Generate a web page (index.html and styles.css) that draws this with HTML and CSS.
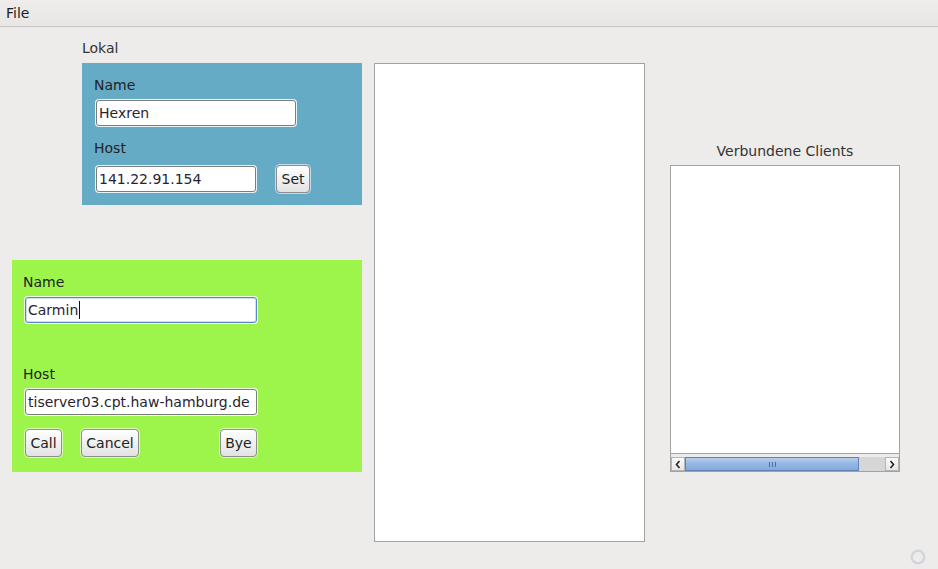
FILE: index.html
```html
<!DOCTYPE html>
<html lang="de">
<head>
<meta charset="utf-8">
<title>Chat</title>
<link rel="stylesheet" href="styles.css">
</head>
<body>
<div class="menubar"><span class="menu-item">File</span></div>
<div class="main">
  <div class="left-col">
    <div class="section-title">Lokal</div>
    <div class="panel panel-local">
      <div class="label">Name</div>
      <div class="field field-name-local"><span class="field-text">Hexren</span></div>
      <div class="label label-host">Host</div>
      <div class="row">
        <div class="field field-host-local"><span class="field-text">141.22.91.154</span></div>
        <button class="btn btn-set">Set</button>
      </div>
    </div>
    <div class="panel panel-remote">
      <div class="label">Name</div>
      <div class="field field-wide focused"><span class="field-text">Carmin</span><span class="caret"></span></div>
      <div class="label label-host-remote">Host</div>
      <div class="field field-wide"><span class="field-text">tiserver03.cpt.haw-hamburg.de</span></div>
      <div class="btn-row">
        <button class="btn btn-call">Call</button>
        <button class="btn btn-cancel">Cancel</button>
        <button class="btn btn-bye">Bye</button>
      </div>
    </div>
  </div>
  <div class="chat-list"></div>
  <div class="right-col">
    <div class="clients-title">Verbundene Clients</div>
    <div class="clients-list">
      <div class="clients-body"></div>
      <div class="hscroll">
        <div class="arrow arrow-left"><svg width="8" height="9" viewBox="0 0 8 9"><path d="M5.5 1 L2.5 4.5 L5.5 8" fill="none" stroke="#222" stroke-width="1.6"/></svg></div>
        <div class="track">
          <div class="thumb"><span class="grip"></span><span class="grip"></span><span class="grip"></span></div>
        </div>
        <div class="arrow arrow-right"><svg width="8" height="9" viewBox="0 0 8 9"><path d="M2.5 1 L5.5 4.5 L2.5 8" fill="none" stroke="#222" stroke-width="1.6"/></svg></div>
      </div>
    </div>
  </div>
</div>
<div class="status-ring"><svg width="18" height="18" viewBox="0 0 18 18"><circle cx="9" cy="9" r="6.3" fill="none" stroke="#d3d5da" stroke-width="2.4"/></svg></div>
</body>
</html>
```

FILE: styles.css
```css
* { box-sizing: border-box; }
html, body {
  margin: 0;
  padding: 0;
  width: 938px;
  height: 569px;
  overflow: hidden;
  background: #edeceb;
  font-family: "DejaVu Sans", "Open Sans", sans-serif;
  font-size: 14px;
  color: #2b2b2b;
}
body { position: relative; }
.menubar {
  height: 27px;
  background: linear-gradient(#eeedec, #e8e7e6);
  border-bottom: 1px solid #c6c5c4;
  padding-left: 6px;
  line-height: 27px;
  font-size: 14px;
  color: #1c1c1c;
}
.main {
  display: flex;
  align-items: flex-start;
  padding: 12px 0 0 12px;
}
.left-col {
  width: 350px;
  display: flex;
  flex-direction: column;
}
.section-title {
  margin-left: 70px;
  height: 24px;
  line-height: 19px;
  color: #333;
}
.panel-local {
  margin-left: 70px;
  width: 280px;
  height: 142px;
  background: #65abc6;
  padding: 12px 12px 0 14px;
}
.panel-remote {
  margin-top: 55px;
  width: 350px;
  height: 212px;
  background: #9df54c;
  padding: 12px 12px 0 13px;
}
.label {
  height: 18px;
  line-height: 20px;
  margin-left: -2px;
  margin-bottom: 7px;
  color: #222;
}
.label-host { margin-top: 12px; margin-bottom: 9px; }
.label-host-remote { margin-top: 41px; margin-bottom: 7px; }
.field {
  height: 26px;
  background: #fff;
  border: 1px solid #7c7c7c;
  border-radius: 3px;
  box-shadow: 0 0 0 1px rgba(255,255,255,0.85);
  padding: 0 2px;
  line-height: 24px;
  white-space: nowrap;
  overflow: hidden;
  color: #2a1f33;
  display: flex;
  align-items: center;
}
.field-name-local { width: 200px; }
.field-host-local { width: 160px; }
.field-wide { width: 232px; }
.field.focused {
  border-color: #5a86c8;
  box-shadow: 0 0 0 1px rgba(255,255,255,0.85), inset 0 0 0 1px rgba(120,160,220,0.35);
}
.caret {
  display: inline-block;
  width: 1px;
  height: 18px;
  background: #111;
  margin-left: 1px;
}
.row {
  display: flex;
  align-items: center;
  gap: 20px;
}
.btn {
  height: 28px;
  font-family: inherit;
  font-size: 14px;
  color: #222;
  background: linear-gradient(#ffffff, #f1f1f1 50%, #e2e2e2);
  border: 1px solid #8e8e8e;
  border-radius: 4px;
  padding: 0;
  box-shadow: 0 0 0 1px rgba(255,255,255,0.6);
}
.btn-set { width: 34px; }
.btn-row {
  display: flex;
  margin-top: 14px;
}
.btn-call { width: 37px; }
.btn-cancel { width: 58px; margin-left: 19px; }
.btn-bye { width: 37px; margin-left: auto; margin-right: 93px; }
.chat-list {
  margin-left: 12px;
  margin-top: 24px;
  width: 271px;
  height: 479px;
  background: #fff;
  border: 1px solid #a2a2a2;
}
.right-col {
  margin-left: 25px;
  margin-top: 102px;
  width: 230px;
  display: flex;
  flex-direction: column;
}
.clients-title {
  height: 24px;
  line-height: 20px;
  text-align: center;
  color: #333;
}
.clients-list {
  height: 307px;
  background: #fff;
  border: 1px solid #a2a2a2;
  display: flex;
  flex-direction: column;
}
.clients-body { flex: 1; }
.hscroll {
  height: 18px;
  border-top: 1px solid #a7a7a7;
  background: #ececec;
  display: flex;
  padding-top: 3px;
}
.arrow {
  width: 14px;
  height: 14px;
  background: linear-gradient(#fbfbfb, #e6e6e6);
  border: 1px solid #b4b4b4;
  display: flex;
  align-items: center;
  justify-content: center;
}
.track {
  flex: 1;
  height: 14px;
  background: #d6d6d6;
  padding-right: 26px;
}
.thumb {
  height: 14px;
  background: linear-gradient(#b5cdef, #95b6e4 50%, #86a9dc);
  border: 1px solid #5f83b7;
  display: flex;
  align-items: center;
  justify-content: center;
  gap: 2px;
}
.grip {
  width: 1px;
  height: 5px;
  background: #4d6f9f;
}
.status-ring {
  position: absolute;
  left: 909px;
  top: 548px;
  width: 18px;
  height: 18px;
}
```
